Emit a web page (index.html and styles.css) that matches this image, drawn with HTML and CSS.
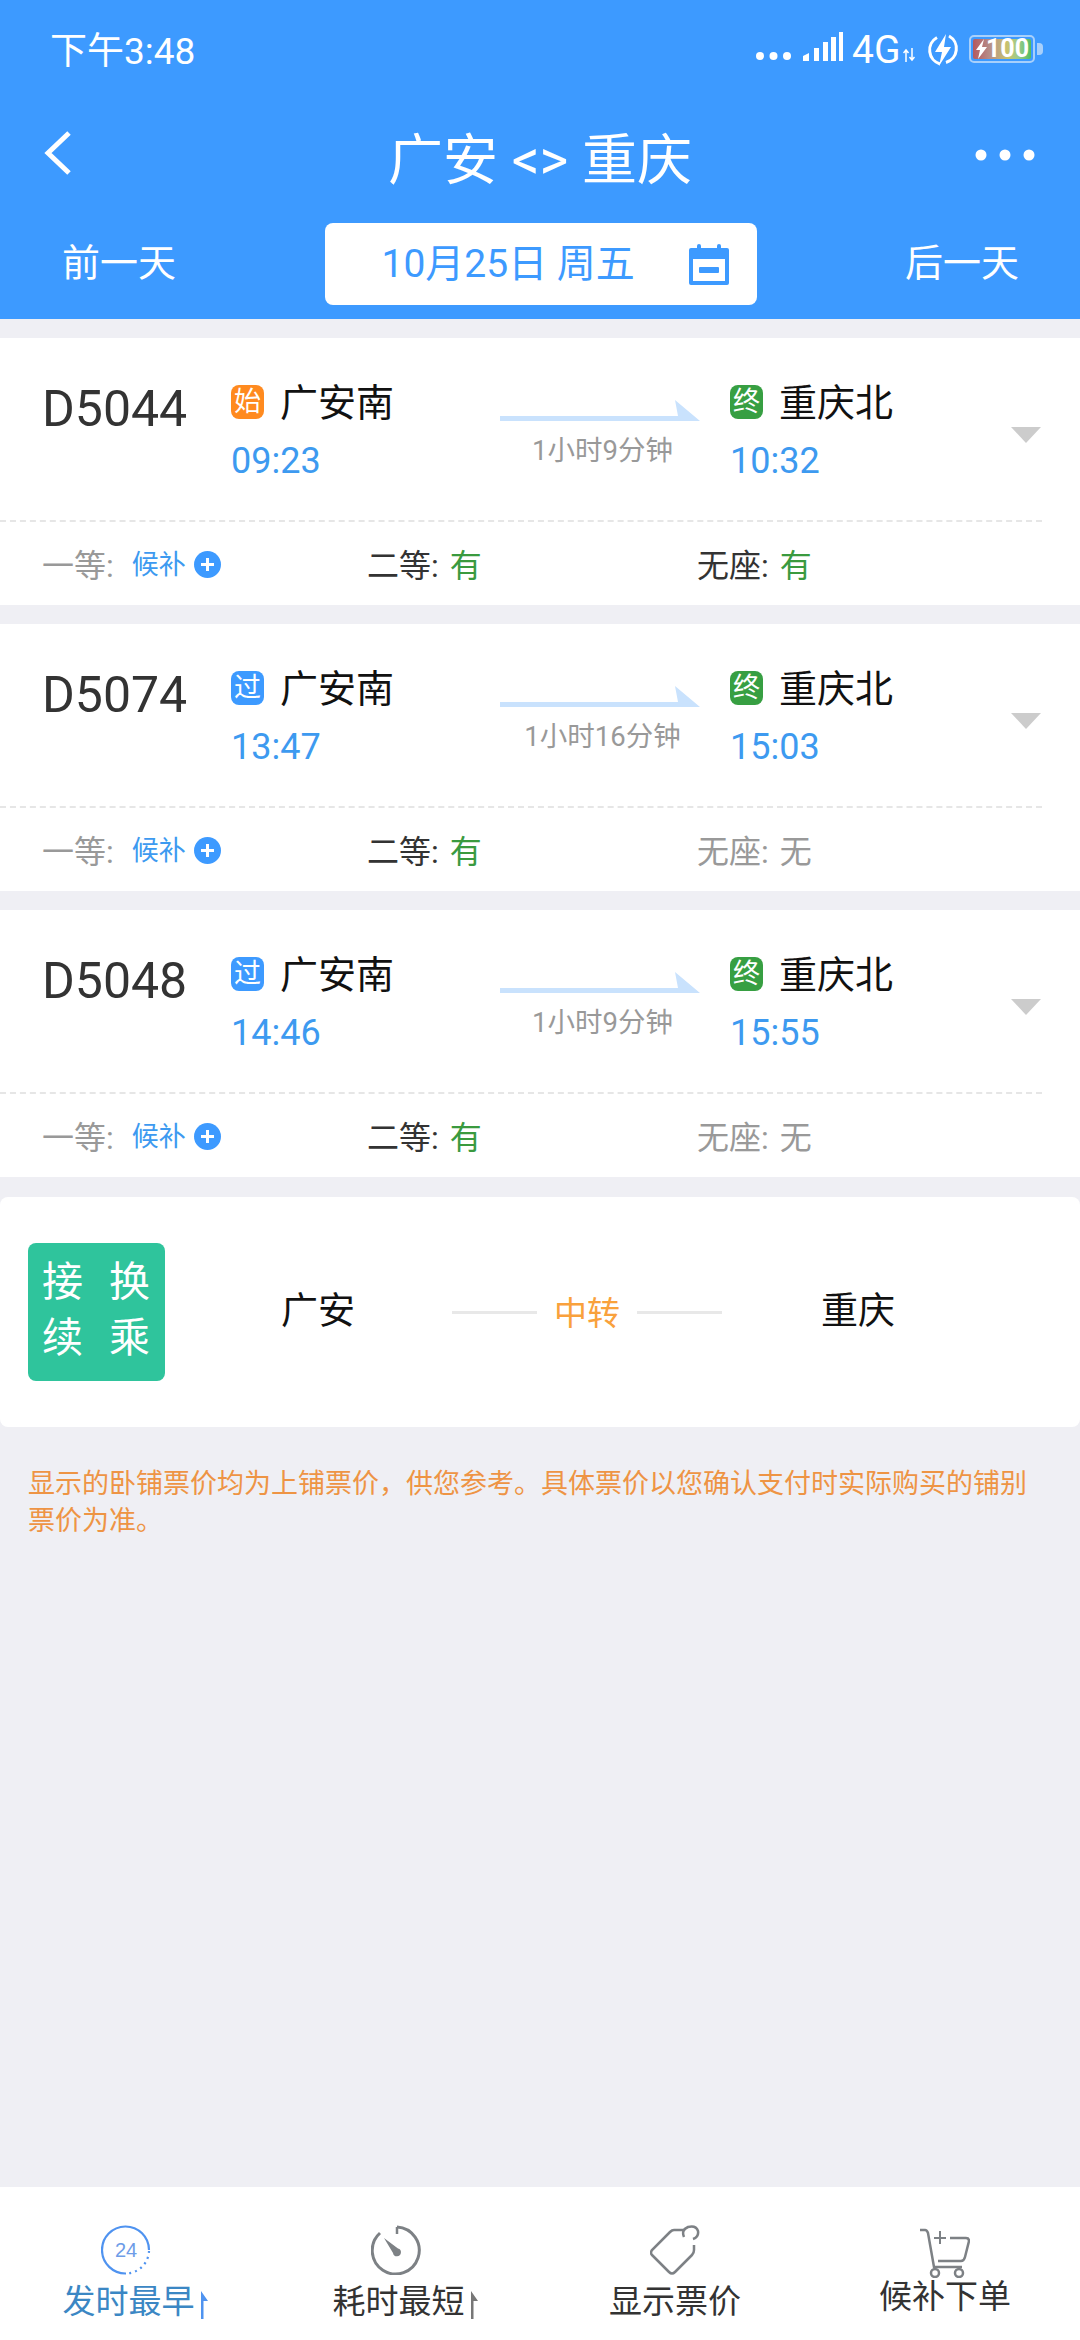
FILE: index.html
```html
<!DOCTYPE html>
<html lang="zh-CN">
<head>
  <meta charset="UTF-8" />
  <title>广安 &lt;&gt; 重庆</title>
  <meta name="viewport" content="width=device-width, initial-scale=1.0" />
  <link rel="stylesheet" href="styles.css">
</head>
<body>
  <div class="page">

    <header class="top">
      <div class="status-bar">
        <span class="clock">下午3:48</span>
        <div class="status-icons">
          <svg class="s-dots" width="35" height="10" viewBox="0 0 35 10"><circle cx="4" cy="5" r="4"/><circle cx="17.500" cy="5" r="4"/><circle cx="31" cy="5" r="4"/></svg>
          <svg class="s-signal" width="40" height="30" viewBox="0 0 40 30"><path d="M0 29V24L6 21V29Z"/><rect x="11" y="16" width="5" height="13"/><rect x="20" y="10" width="5" height="19"/><rect x="28" y="5" width="5" height="24"/><rect x="36" y="0" width="4" height="29"/></svg>
          <span class="net">4G</span>
          <svg class="s-arrows" width="12" height="14" viewBox="0 0 12 14"><path d="M3 14V2M0.500 5L3 2L5.500 5M9 0V12M6.500 9L9 12L11.500 9" fill="none" stroke="#fff" stroke-width="1.500"/></svg>
          <svg class="s-bolt" width="34" height="34" viewBox="0 0 34 34"><path d="M11 4.500A14.500 14.500 0 0 0 14 31M23 3A14.500 14.500 0 0 1 20 29.500" fill="none" stroke="#fff" stroke-width="3"/><path d="M20 1L9 19H16L13 33L25 14H18Z" fill="#fff"/></svg>
          <div class="battery">
            <div class="battery-fill"><svg width="11" height="20" viewBox="0 0 11 20"><path d="M8 0L0 11H4L2 20L11 8H6Z" fill="#fff"/></svg><span>100</span></div>
          </div>
          <div class="battery-nub"></div>
        </div>
      </div>

      <div class="title-bar">
        <svg class="back" width="34" height="46" viewBox="0 0 34 46"><path d="M28 3L7 23L28 43" fill="none" stroke="#fff" stroke-width="5"/></svg>
        <h1>广安 &lt;&gt; 重庆</h1>
        <svg class="more" width="60" height="12" viewBox="0 0 60 12"><circle cx="6" cy="6" r="5.500"/><circle cx="30" cy="6" r="5.500"/><circle cx="54" cy="6" r="5.500"/></svg>
      </div>

      <div class="date-bar">
        <span class="day-link">前一天</span>
        <div class="date-box">
          <span class="date-text">10月25日 周五</span>
          <svg width="42" height="42" viewBox="0 0 42 42"><path d="M3 7H39V40H3Z" fill="none" stroke="#3d9aff" stroke-width="4" stroke-linejoin="round"/><rect x="2" y="7" width="38" height="9" fill="#3d9aff"/><rect x="9" y="1" width="4" height="9" rx="2" fill="#3d9aff"/><rect x="29" y="1" width="4" height="9" rx="2" fill="#3d9aff"/><rect x="11" y="24" width="20" height="6" rx="1" fill="#3d9aff"/></svg>
        </div>
        <span class="day-link">后一天</span>
      </div>
    </header>

    <section class="train">
      <div class="train-main">
        <div class="train-no">D5044</div>
        <div class="stop">
          <div class="stop-name"><i class="badge orange">始</i><span>广安南</span></div>
          <div class="stop-time">09:23</div>
        </div>
        <div class="run">
          <svg class="run-arrow" width="200" height="21" viewBox="0 0 200 21"><path d="M0 16H178L175 0L200 21H0Z" fill="#c9e2fd"/></svg>
          <div class="run-time">1小时9分钟</div>
        </div>
        <div class="stop">
          <div class="stop-name"><i class="badge green">终</i><span>重庆北</span></div>
          <div class="stop-time">10:32</div>
        </div>
        <div class="caret"></div>
      </div>
      <div class="seats">
        <div class="seat muted">一等: <span class="wait">候补</span><i class="plus"></i></div>
        <div class="seat">二等: <span class="yes">有</span></div>
        <div class="seat">无座: <span class="yes">有</span></div>
      </div>
    </section>

    <section class="train">
      <div class="train-main">
        <div class="train-no">D5074</div>
        <div class="stop">
          <div class="stop-name"><i class="badge blue">过</i><span>广安南</span></div>
          <div class="stop-time">13:47</div>
        </div>
        <div class="run">
          <svg class="run-arrow" width="200" height="21" viewBox="0 0 200 21"><path d="M0 16H178L175 0L200 21H0Z" fill="#c9e2fd"/></svg>
          <div class="run-time">1小时16分钟</div>
        </div>
        <div class="stop">
          <div class="stop-name"><i class="badge green">终</i><span>重庆北</span></div>
          <div class="stop-time">15:03</div>
        </div>
        <div class="caret"></div>
      </div>
      <div class="seats">
        <div class="seat muted">一等: <span class="wait">候补</span><i class="plus"></i></div>
        <div class="seat">二等: <span class="yes">有</span></div>
        <div class="seat muted">无座: <span class="none">无</span></div>
      </div>
    </section>

    <section class="train">
      <div class="train-main">
        <div class="train-no">D5048</div>
        <div class="stop">
          <div class="stop-name"><i class="badge blue">过</i><span>广安南</span></div>
          <div class="stop-time">14:46</div>
        </div>
        <div class="run">
          <svg class="run-arrow" width="200" height="21" viewBox="0 0 200 21"><path d="M0 16H178L175 0L200 21H0Z" fill="#c9e2fd"/></svg>
          <div class="run-time">1小时9分钟</div>
        </div>
        <div class="stop">
          <div class="stop-name"><i class="badge green">终</i><span>重庆北</span></div>
          <div class="stop-time">15:55</div>
        </div>
        <div class="caret"></div>
      </div>
      <div class="seats">
        <div class="seat muted">一等: <span class="wait">候补</span><i class="plus"></i></div>
        <div class="seat">二等: <span class="yes">有</span></div>
        <div class="seat muted">无座: <span class="none">无</span></div>
      </div>
    </section>

    <section class="transfer">
      <div class="transfer-badge">
        <span>接</span><span>换</span><span>续</span><span>乘</span>
      </div>
      <div class="transfer-city">广安</div>
      <div class="transfer-mid"><b></b><span>中转</span><b></b></div>
      <div class="transfer-city">重庆</div>
    </section>

    <p class="note">显示的卧铺票价均为上铺票价，供您参考。具体票价以您确认支付时实际购买的铺别票价为准。</p>

    <nav class="tabs">
      <div class="tab active">
        <svg class="sort-icon" width="50" height="50" viewBox="0 0 50 50">
          <path d="M48 25A23.500 23.500 0 1 0 25 48.500" fill="none" stroke="#4f93f0" stroke-width="2.200"/>
          <path d="M48 26A23.500 23.500 0 0 1 26 48.500" fill="none" stroke="#4f93f0" stroke-width="2.200" stroke-dasharray="2 4"/>
          <text x="25" y="32" class="tab-24">24</text>
        </svg>
        <span class="tab-label">发时最早<svg class="sort" width="7" height="28" viewBox="0 0 7 28"><path d="M0 0L7 10H2.500V28H0Z"/></svg></span>
      </div>
      <div class="tab">
        <svg class="sort-icon" width="50" height="50" viewBox="0 0 50 50">
          <path d="M26 2A23.500 23.500 0 1 1 9 8" fill="none" stroke="#7d8185" stroke-width="3"/>
          <path d="M26 2V9" fill="none" stroke="#7d8185" stroke-width="2.500"/>
          <path d="M13 13L27 23.500A4 4 0 1 1 22 28Z" fill="#7d8185"/>
        </svg>
        <span class="tab-label">耗时最短<svg class="sort" width="7" height="28" viewBox="0 0 7 28"><path d="M0 0L7 10H2.500V28H0Z"/></svg></span>
      </div>
      <div class="tab">
        <svg width="50" height="50" viewBox="0 0 50 50">
          <path d="M34 5H24Q22 5 20 7L2 25Q0 28 2 30L19 47Q22 50 25 47L42 30Q44 28 44 25V20" fill="none" stroke="#7d8185" stroke-width="2.500"/>
          <path d="M34 12Q31 5 38 2Q46 0 48 6Q49 12 43 14" fill="none" stroke="#7d8185" stroke-width="2.500"/>
        </svg>
        <span class="tab-label">显示票价</span>
      </div>
      <div class="tab cart">
        <svg width="50" height="50" viewBox="0 0 50 50">
          <path d="M0 2H5Q7 2 8 5L14 39H42" fill="none" stroke="#7d8185" stroke-width="2.500"/>
          <path d="M30 10H46Q49 10 49 13L45 29Q44 33 41 33H18" fill="none" stroke="#7d8185" stroke-width="2.500"/>
          <path d="M20 3V16M14 10H26" fill="none" stroke="#7d8185" stroke-width="2"/>
          <circle cx="15" cy="45" r="4" fill="none" stroke="#7d8185" stroke-width="2.500"/>
          <circle cx="39" cy="45" r="4" fill="none" stroke="#7d8185" stroke-width="2.500"/>
        </svg>
        <span class="tab-label">候补下单</span>
      </div>
    </nav>

  </div>
</body>
</html>
```

FILE: styles.css
```css
* {
  box-sizing: border-box;
}

body {
  margin: 0;
  font-family: Roboto, 'Noto Sans CJK SC', sans-serif;
  background: #efeff4;
  color: #333;
}

.page {
  width: 1080px;
  height: 2340px;
  display: flex;
  flex-direction: column;
}

/* header */

.top {
  height: 319px;
  background: #3d9aff;
  color: #fff;
  margin-bottom: 19px;
}

.status-bar {
  height: 100px;
  padding: 0 37px 0 50px;
  display: flex;
  align-items: center;
  justify-content: space-between;
}

.clock {
  font-size: 37px;
  margin-top: -5px;
}

.status-icons {
  display: flex;
  align-items: center;
  fill: #fff;
}

.s-dots {
  margin-top: 12px;
}

.s-signal {
  margin-left: 12px;
  margin-top: -6px;
}

.net {
  font-size: 39px;
  margin-left: 9px;
  width: 51px;
  line-height: 1;
}

.s-arrows {
  margin-top: 10px;
}

.s-bolt {
  margin-left: 11px;
}

.battery {
  width: 66px;
  height: 28px;
  margin-left: 9px;
  margin-top: -3px;
  padding: 2px;
  border: 2px solid #a8d0fb;
  border-radius: 5px;
}

.battery-fill {
  height: 100%;
  display: flex;
  align-items: center;
  padding-left: 3px;
  border-radius: 2px;
  background: linear-gradient(90deg, #b5595f 0%, #b5908a 30%, #c8c46c 60%, #9acb8e 78%, #52bc62 100%);
  color: #fff;
  font-size: 25px;
  font-weight: 700;
  line-height: 1;
}

.battery-fill span {
  margin-left: -1px;
}

.battery-nub {
  width: 6px;
  height: 12px;
  margin-left: 2px;
  margin-top: -3px;
  border-radius: 0 4px 4px 0;
  background: #a8d0fb;
}

.title-bar {
  height: 110px;
  padding: 0 45px;
  position: relative;
  display: flex;
  align-items: center;
  justify-content: space-between;
}

.title-bar h1 {
  margin: 0;
  position: absolute;
  left: 0;
  right: 0;
  text-align: center;
  font-size: 55px;
  font-weight: 400;
}

.back {
  margin-left: -4px;
  margin-top: -4px;
}

.more {
  fill: #fff;
  margin-top: 0;
}

.date-bar {
  padding: 13px 61px 0 62px;
  display: flex;
  align-items: center;
  justify-content: space-between;
}

.day-link {
  font-size: 38px;
  margin-top: -9px;
}

.date-box {
  width: 432px;
  height: 82px;
  padding: 0 27px 0 57px;
  display: flex;
  align-items: center;
  justify-content: space-between;
  background: #fff;
  border-radius: 8px;
  color: #3d9aff;
  font-size: 39px;
}

.date-text {
  margin-top: -9px;
}

/* train cards */

.train {
  height: 267px;
  background: #fff;
  margin-bottom: 19px;
}

.train-main {
  height: 184px;
  padding: 41px 0 0 42px;
  display: grid;
  grid-template-columns: 189px 269px 230px 238px 31px;
  align-items: start;
  border-bottom: 2px dashed #e6e6e6;
  margin-right: 38px;
  position: relative;
}

.train-no {
  font-size: 50px;
  line-height: 60px;
  color: #333;
}

.stop-name {
  display: flex;
  align-items: center;
  height: 46px;
  font-size: 38px;
  color: #111;
}

.stop-name span {
  margin-top: -5px;
}

.badge {
  width: 33px;
  height: 34px;
  margin-right: 16px;
  border-radius: 8px;
  display: flex;
  align-items: center;
  justify-content: center;
  color: #fff;
  font-style: normal;
  font-size: 27px;
  line-height: 1;
}

.orange {
  background: #ff8a1f;
}

.green {
  background: #379f42;
}

.blue {
  background: #3d9aff;
}

.stop-time {
  margin-top: 13px;
  font-size: 36px;
  line-height: 46px;
  color: #3d9af0;
}

.run {
  width: 200px;
  padding-top: 21px;
  display: flex;
  flex-direction: column;
  align-items: center;
}

.run-arrow {
  display: block;
}

.run-time {
  margin-top: 12px;
  margin-left: 5px;
  font-size: 27.500px;
  line-height: 36px;
  color: #999;
  white-space: nowrap;
}

.caret {
  width: 0;
  height: 0;
  margin-top: 48px;
  border-left: 15.500px solid transparent;
  border-right: 15.500px solid transparent;
  border-top: 16px solid #ccc;
  margin-left: 43px;
}

.seats {
  height: 81px;
  padding-left: 42px;
  display: grid;
  grid-template-columns: 325px 330px 1fr;
  align-items: center;
}

.seat {
  display: flex;
  align-items: center;
  font-size: 32px;
  color: #333;
  white-space: pre;
}

.muted {
  color: #999;
}

.wait {
  margin-left: 10px;
  font-size: 27px;
  color: #3d9af0;
}

.plus {
  width: 27px;
  height: 27px;
  margin-left: 8px;
  margin-top: 3px;
  border-radius: 50%;
  background: #3d9aff;
  position: relative;
}

.plus::before,
.plus::after {
  content: "";
  position: absolute;
  background: #fff;
}

.plus::before {
  left: 7px;
  top: 12px;
  width: 13px;
  height: 3px;
}

.plus::after {
  left: 12px;
  top: 7px;
  width: 3px;
  height: 13px;
}

.yes,
.none {
  margin-left: 3px;
}

.yes {
  color: #3a9a3f;
}

/* transfer */

.transfer {
  height: 230px;
  margin-top: 1px;
  padding-left: 28px;
  display: flex;
  align-items: center;
  background: #fff;
  border-radius: 8px;
}

.transfer-badge {
  width: 137px;
  height: 138px;
  padding: 11px 15px 14px 14px;
  display: grid;
  grid-template-columns: 1fr 1fr;
  grid-template-rows: 1fr 1fr;
  align-items: center;
  justify-items: start;
  background: #2fc49c;
  border-radius: 8px;
  color: #fff;
  font-size: 41px;
  line-height: 1;
}

.transfer-badge span:nth-child(even) {
  justify-self: end;
}

.transfer-city {
  font-size: 37px;
  color: #111;
  margin-left: 116px;
  margin-top: -8px;
}

.transfer-mid {
  width: 270px;
  margin-left: 97px;
  margin-right: -17px;
  display: flex;
  align-items: center;
  justify-content: space-between;
  color: #f9a13c;
  font-size: 33px;
}

.transfer-mid span {
  margin-top: -3px;
}

.transfer-mid b {
  width: 85px;
  height: 3px;
  background: #e8e8e8;
}

.note {
  margin: 39px 48px 0 28px;
  font-size: 27px;
  line-height: 37px;
  color: #ee9444;
}

/* bottom tabs */

.tabs {
  margin-top: auto;
  height: 153px;
  display: grid;
  grid-template-columns: repeat(4, 1fr);
  background: #fff;
}

.tab {
  padding-top: 38px;
  display: flex;
  flex-direction: column;
  align-items: center;
}

.tab svg {
  display: block;
}

.tab .sort-icon {
  margin-right: 18px;
}

.tab-label {
  margin-top: 5px;
  height: 44px;
  display: flex;
  align-items: center;
  font-size: 33px;
  line-height: 44px;
  color: #333;
}

.cart {
  padding-top: 41px;
}

.cart .tab-label {
  margin-top: -3px;
}

.sort {
  margin-left: 6px;
  margin-top: 6px;
  fill: #777;
}

.active .tab-label {
  color: #3b87c4;
}

.active .sort {
  fill: #4f93f0;
}

.tab-24 {
  font-family: 'Liberation Sans', sans-serif;
  font-size: 20px;
  fill: #6d9ce8;
  text-anchor: middle;
}
```
